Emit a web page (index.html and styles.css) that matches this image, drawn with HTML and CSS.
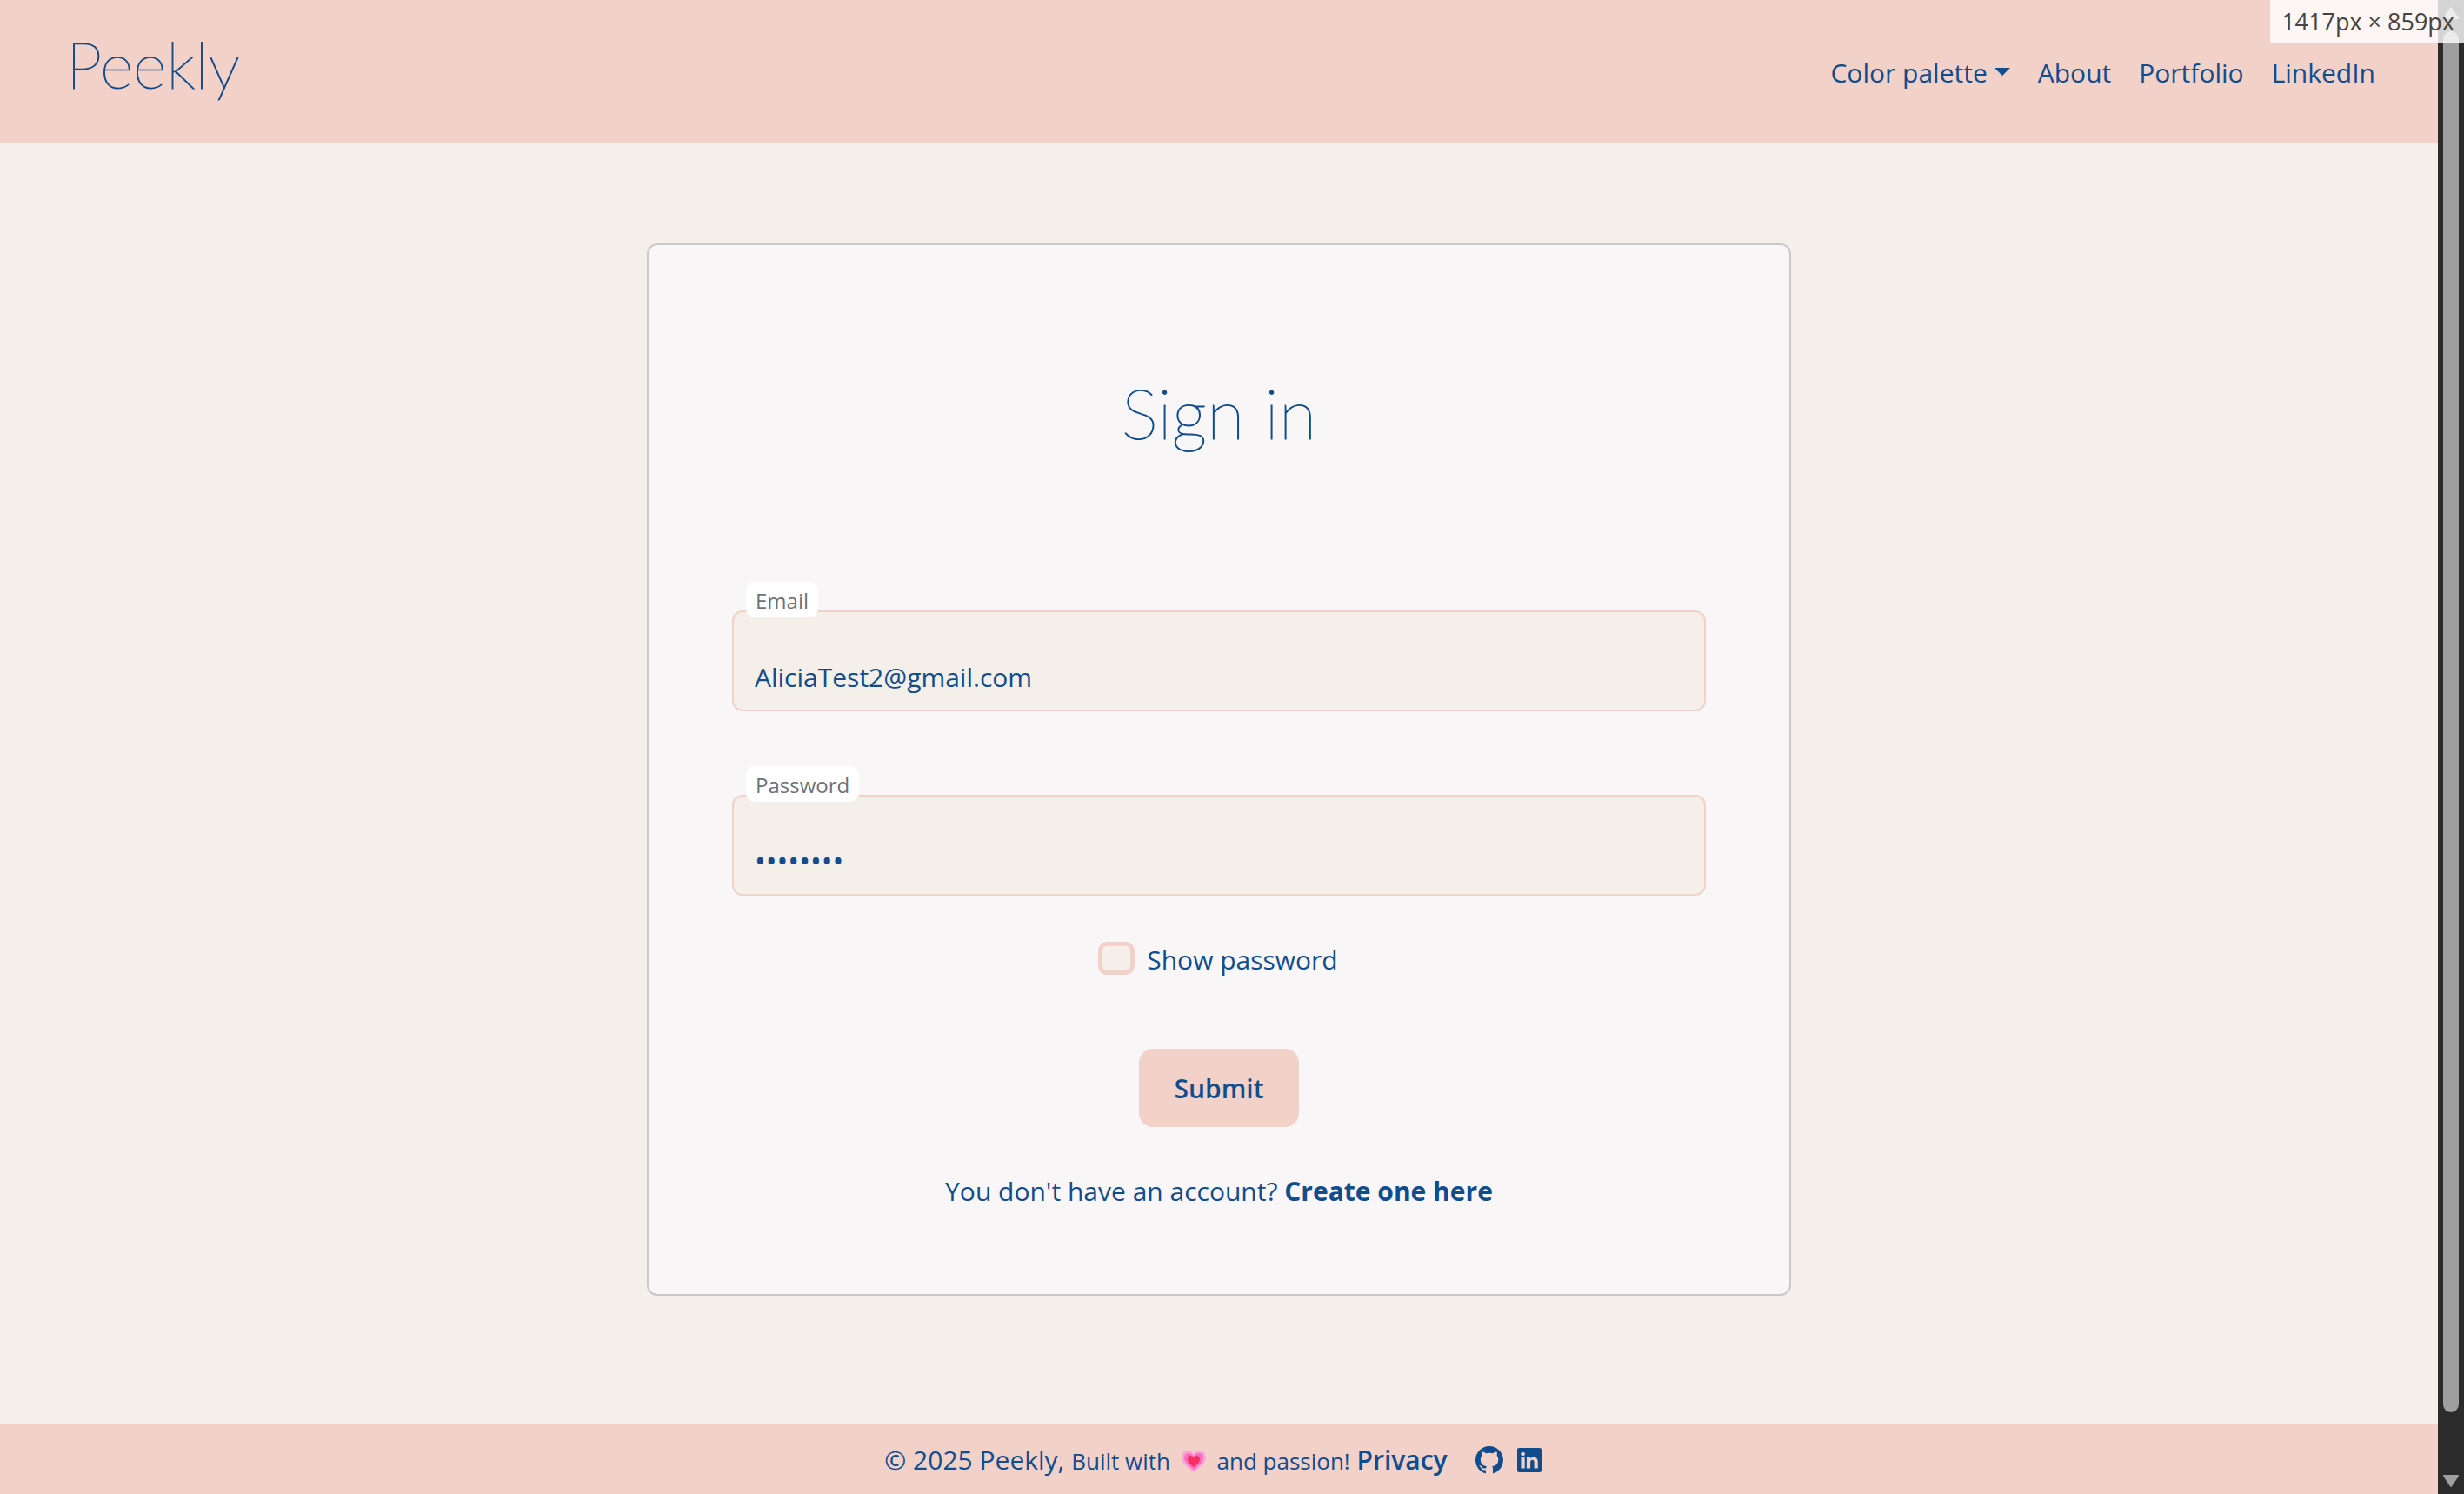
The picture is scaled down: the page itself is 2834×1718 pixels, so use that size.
FILE: index.html
```html
<!DOCTYPE html>
<html lang="en">
<head>
  <meta charset="utf-8">
  <title>Peekly - Sign in</title>
  <link rel="stylesheet" href="styles.css">
</head>
<body>
  <div class="page">
    <header class="site-header">
      <a class="brand" href="#">Peekly</a>
      <nav class="site-nav">
        <button class="nav-item nav-toggle" type="button">Color palette<span class="caret"></span></button>
        <a class="nav-item" href="#">About</a>
        <a class="nav-item" href="#">Portfolio</a>
        <a class="nav-item" href="#">LinkedIn</a>
      </nav>
    </header>

    <main class="content">
      <form class="card">
        <h1 class="card-title">Sign in</h1>
        <div class="field">
          <label class="field-label" for="email">Email</label>
          <input class="field-input" id="email" type="email" value="AliciaTest2@gmail.com">
        </div>
        <div class="field">
          <label class="field-label" for="password">Password</label>
          <input class="field-input field-password" id="password" type="password" value="password">
        </div>
        <div class="check-row">
          <input class="check" id="show" type="checkbox">
          <label class="check-label" for="show">Show password</label>
        </div>
        <button class="submit" type="submit">Submit</button>
        <p class="signup">You don't have an account? <a class="signup-link" href="#">Create one here</a></p>
      </form>
    </main>

    <footer class="site-footer">
      <p class="credits">© 2025 Peekly, <span class="small">Built with
        <svg class="heart" viewBox="0 0 28 26" aria-hidden="true">
          <path fill="#f9a3dc" d="M14 25C6 19 0 14 0 8c0-4 3-8 7-8 3 0 6 2 7 4 1-2 4-4 7-4 4 0 7 4 7 8 0 6-6 11-14 17z"/>
          <path fill="#fb6fb8" d="M14 22.500C8 17 3 13 3 9c0-3 2-6 5-6s5 2 6 4c1-2 3-4 6-4s5 3 5 6c0 4-5 8-11 13.500z"/>
          <path fill="#f92f62" d="M14 19c-5-4-7-6-7-9 0-2 1.500-4 3.500-4S13 7 14 9c1-2 1.500-3 3.500-3S21 8 21 10c0 3-2 5-7 9z"/>
        </svg>
        and passion!</span> <a class="privacy" href="#">Privacy</a></p>
      <a class="social" href="#" aria-label="GitHub">
        <svg class="icon" viewBox="0 0 16 16"><path fill="currentColor" d="M8 0C3.580 0 0 3.580 0 8c0 3.540 2.290 6.530 5.470 7.590.4.070.55-.17.55-.38 0-.19-.01-.82-.01-1.490-2.010.37-2.530-.49-2.690-.94-.09-.23-.48-.94-.82-1.130-.28-.15-.68-.52-.01-.53.63-.01 1.080.58 1.230.82.72 1.210 1.870.87 2.330.66.07-.52.28-.87.51-1.070-1.780-.2-3.640-.89-3.640-3.950 0-.87.31-1.590.82-2.150-.08-.2-.36-1.020.08-2.120 0 0 .67-.21 2.200.82.64-.18 1.320-.27 2-.27s1.360.09 2 .27c1.530-1.040 2.200-.82 2.200-.82.44 1.100.16 1.920.08 2.120.51.56.82 1.270.82 2.150 0 3.070-1.870 3.750-3.650 3.950.29.25.54.73.54 1.480 0 1.070-.01 1.930-.01 2.200 0 .21.15.46.55.38A8.010 8.010 0 0 0 16 8c0-4.420-3.580-8-8-8z"/></svg>
      </a>
      <a class="social" href="#" aria-label="LinkedIn profile">
        <svg class="icon icon-square" viewBox="0 0 16 16"><path fill="currentColor" d="M0 1.146C0 .513.526 0 1.175 0h13.650C15.474 0 16 .513 16 1.146v13.708c0 .633-.526 1.146-1.175 1.146H1.175C.526 16 0 15.487 0 14.854zm4.943 12.248V6.169H2.542v7.225zm-1.200-8.212c.837 0 1.358-.554 1.358-1.248-.015-.709-.52-1.248-1.342-1.248S2.400 3.226 2.400 3.934c0 .694.521 1.248 1.327 1.248zm4.908 8.212V9.359c0-.216.016-.432.08-.586.173-.431.568-.878 1.232-.878.869 0 1.216.662 1.216 1.634v3.865h2.401V9.250c0-2.220-1.184-3.252-2.764-3.252-1.274 0-1.845.7-2.165 1.193v.025h-.016l.016-.025V6.169h-2.400c.03.678 0 7.225 0 7.225z"/></svg>
      </a>
    </footer>
  </div>

  <div class="scrollbar" aria-hidden="true">
    <svg class="arrow" viewBox="0 0 18 14"><path d="M9 1L17 13H1z"/></svg>
    <div class="thumb"></div>
    <svg class="arrow arrow-down" viewBox="0 0 18 14"><path d="M9 13L17 1H1z"/></svg>
  </div>
  <div class="size-badge">1417px × 859px</div>
</body>
</html>
```
FILE: styles.css
```css
:root {
  --blue: #114c8c;
  --pink: #f2d1c9;
  --cream: #f4efe8;
  --card: #f8f6f7;
}

* {
  box-sizing: border-box;
}

body {
  margin: 0;
  display: flex;
  min-height: 100vh;
  background: var(--cream);
  color: var(--blue);
  font: 30px/40px "Open Sans", "Noto Sans", sans-serif;
}

a {
  color: inherit;
  text-decoration: none;
}

button,
input {
  font: inherit;
  color: inherit;
}

.page {
  flex: 1;
  display: flex;
  flex-direction: column;
}

.site-header {
  display: flex;
  justify-content: space-between;
  align-items: flex-start;
  padding: 26px 72px 42px 76px;
  background: var(--pink);
}

.brand,
.card-title {
  font: 100 80px/96px Lato, sans-serif;
  -webkit-text-stroke: 1px var(--blue);
}

.brand {
  font-size: 74px;
}

.site-nav {
  display: flex;
  gap: 32px;
  padding-top: 38px;
}

.nav-toggle {
  display: flex;
  gap: 8px;
  padding: 0;
  border: 0;
  background: none;
}

.caret {
  margin-top: 14px;
  height: 9px;
  border: 9px solid transparent;
  border-top-color: var(--blue);
  border-bottom: 0;
}

.content {
  flex: 1;
  padding: 116px 48px;
}

.card {
  display: flex;
  flex-direction: column;
  align-items: center;
  width: 100%;
  max-width: 1316px;
  margin: 0 auto;
  padding: 144px 96px 98px;
  border: 2px solid #cac8ca;
  border-radius: 12px;
  background: var(--card);
}

.card-title {
  margin: 0 0 180px;
}

.field {
  position: relative;
  width: 100%;
}

.field + .field {
  margin-top: 96px;
}

.field-label {
  position: absolute;
  top: -33px;
  left: 16px;
  padding: 6px 11px 3px;
  border-radius: 10px;
  background: #fff;
  color: #6f7177;
  font-size: 24px;
  line-height: 32px;
}

.field-input {
  display: block;
  width: 100%;
  height: 116px;
  padding: 54px 24px 18px;
  border: 2px solid var(--pink);
  border-radius: 12px;
  background: var(--cream);
}

.field-password {
  font-size: 34px;
}

.check-row {
  display: flex;
  gap: 14px;
  margin-top: 53px;
}

.check {
  appearance: none;
  width: 42px;
  height: 38px;
  margin: 0;
  border: 5px solid var(--pink);
  border-radius: 10px;
  background: var(--cream);
}

.check-label {
  padding: 1px 2px 0 0;
}

.submit {
  margin-top: 82px;
  padding: 26px 40px 24px;
  border: 0;
  border-radius: 16px;
  background: var(--pink);
  font-weight: 600;
}

.signup {
  margin: 54px 0 0;
}

.signup-link {
  font-weight: 700;
}

.site-footer {
  display: flex;
  justify-content: center;
  align-items: center;
  height: 80px;
  padding: 2px 34px 0 20px;
  background: var(--pink);
}

.credits {
  margin: 0 16px 0 0;
}

.small {
  font-size: 26px;
}

.heart {
  width: 28px;
  height: 26px;
  margin: 0 6px;
  vertical-align: -4px;
}

.privacy {
  font-weight: 600;
}

.social {
  display: flex;
  margin-left: 16px;
}

.icon {
  width: 32px;
  height: 32px;
}

.icon-square {
  width: 28px;
  height: 28px;
}

.scrollbar {
  display: flex;
  flex-direction: column;
  align-items: center;
  width: 30px;
  padding: 8px 0;
  background: #2b2b2b;
}

.arrow {
  width: 18px;
  height: 14px;
  fill: #9f9f9f;
  stroke: #9f9f9f;
  stroke-width: 2px;
  stroke-linejoin: round;
}

.thumb {
  flex: 1;
  width: 18px;
  margin: 14px 0 72px;
  border-radius: 9px;
  background: #9f9f9f;
}

.size-badge {
  position: absolute;
  top: 0;
  right: 0;
  padding: 7px 11px 7px 13px;
  background: rgba(255, 255, 255, 0.8);
  color: #444;
  font-size: 27px;
  line-height: 36px;
}
```
